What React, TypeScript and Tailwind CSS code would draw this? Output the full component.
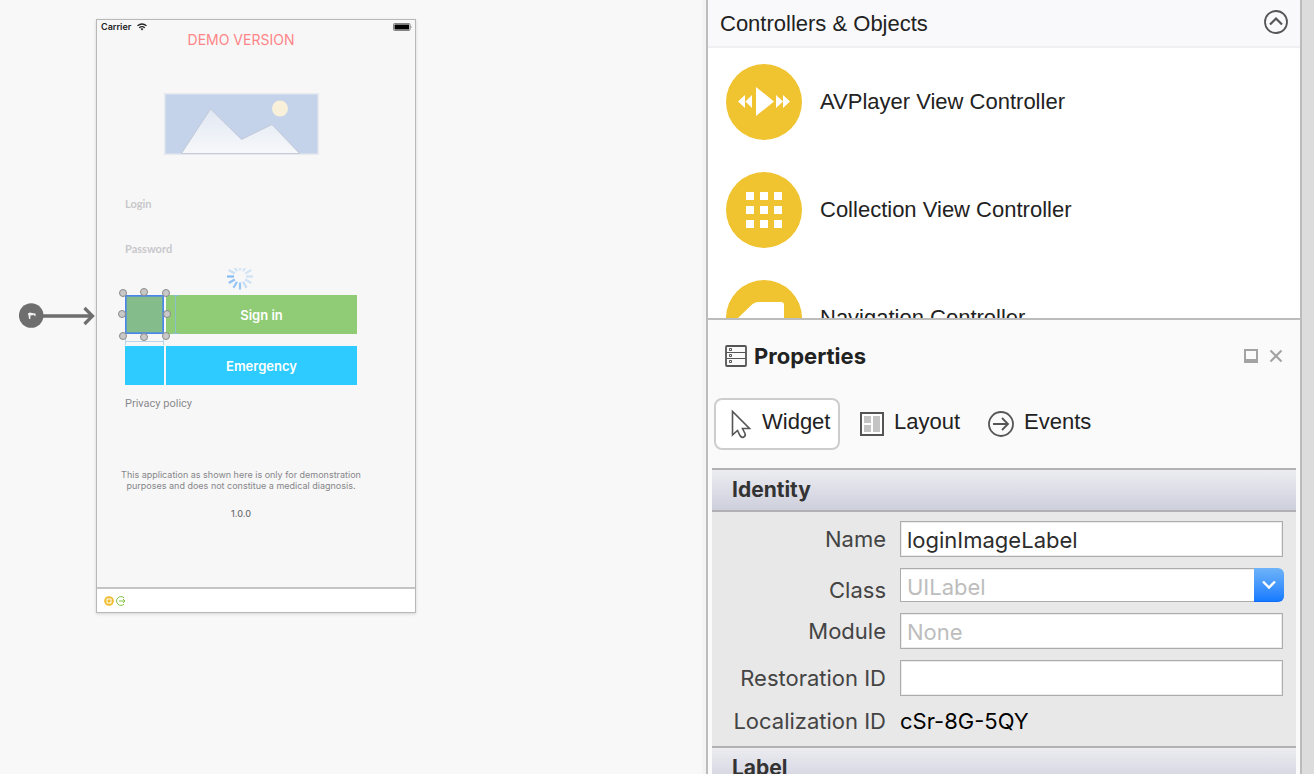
import type { ReactNode } from "react";

const UI = "font-['Inter','Liberation_Sans',sans-serif]";

function PlayerIcon() {
  return (
    <svg viewBox="0 0 76 76" className="size-[76px] shrink-0" aria-hidden="true">
      <circle cx="38" cy="38" r="38" fill="#f0c330" />
      <g fill="#fff">
        <path d="M30 23 48 37.500 30 52Z" />
        <path d="M19 31V44L12 37.500ZM26 31V44L19.500 37.500Z" />
        <path d="M50 31V44L57 37.500ZM57 31V44L64 37.500Z" />
      </g>
    </svg>
  );
}

function CollectionIcon() {
  const steps = [20, 34, 48];
  return (
    <svg viewBox="0 0 76 76" className="size-[76px] shrink-0" aria-hidden="true">
      <circle cx="38" cy="38" r="38" fill="#f0c330" />
      {steps.map((y) => steps.map((x) => <rect key={`${x}-${y}`} x={x} y={y} width="8" height="8" fill="#fff" />))}
    </svg>
  );
}

function NavigationIcon() {
  return (
    <svg viewBox="0 0 76 76" className="size-[76px] shrink-0" aria-hidden="true">
      <circle cx="38" cy="38" r="38" fill="#f0c330" />
      <path d="M12 38 26 24.500Q28.500 22 32 22H55Q58 22 58 25V51Q58 54 55 54H32Q28.500 54 26 51.500Z" fill="#fff" />
    </svg>
  );
}

function LibraryItem({ icon, label }: { icon: ReactNode; label: string }) {
  return (
    <li className="flex items-center gap-[18px]">
      {icon}
      <span className="pb-0.5">{label}</span>
    </li>
  );
}

function Library() {
  return (
    <section className="flex h-80 shrink-0 flex-col overflow-hidden border-b-2 border-[#bcbcbc] bg-white font-['Liberation_Sans',sans-serif] text-[22px] text-[#222]">
      <header className="flex h-12 shrink-0 items-center justify-between border-b-2 border-[#f0f0f3] bg-[#f9f9fc] px-3 pb-0.5">
        <h2 className="pt-0.5">Controllers &amp; Objects</h2>
        <button type="button" aria-label="Collapse section">
          <svg viewBox="0 0 24 24" className="size-6" fill="none" stroke="#555" aria-hidden="true">
            <circle cx="12" cy="12" r="11" strokeWidth="1.800" />
            <path d="m6 14.500 6-6 6 6" strokeWidth="2.200" />
          </svg>
        </button>
      </header>
      <ul className="flex flex-col gap-8 px-[18px] pt-4">
        <LibraryItem icon={<PlayerIcon />} label="AVPlayer View Controller" />
        <LibraryItem icon={<CollectionIcon />} label="Collection View Controller" />
        <LibraryItem icon={<NavigationIcon />} label="Navigation Controller" />
      </ul>
    </section>
  );
}

function SectionTitle({ children }: { children: ReactNode }) {
  return (
    <h3 className="flex h-11 shrink-0 items-center border-y-2 border-[#b1b1b4] bg-linear-to-b from-[#ececf1] to-[#cdcfdc] px-5 text-[21px] leading-8 font-bold text-[#333]">
      {children}
    </h3>
  );
}

const labelClass = "w-[174px] shrink-0 text-right text-[22px] leading-6 text-[#444]";
const fieldClass =
  "h-9 w-full min-w-0 border border-[#acacac] bg-white px-1.5 pt-0.5 text-[22px] text-[#2c2c2c] shadow-[inset_0_0_0_1px_#ececec] outline-none placeholder:text-[#bdbdbd]";

function TextField({ id, label, value, placeholder }: { id: string; label: string; value?: string; placeholder?: string }) {
  return (
    <div className="flex items-center gap-3.5">
      <label htmlFor={id} className={labelClass}>
        {label}
      </label>
      <input id={id} type="text" defaultValue={value} placeholder={placeholder} className={fieldClass} />
    </div>
  );
}

function Properties() {
  return (
    <section className={`${UI} flex min-h-0 flex-1 flex-col overflow-hidden bg-[#fafafa]`}>
      <header className="flex h-[72px] shrink-0 items-center gap-[7px] pr-[17px] pl-[17px]">
        <svg viewBox="0 0 22 22" className="size-[22px]" fill="none" stroke="#555" aria-hidden="true">
          <rect x="1" y="1" width="20" height="20" rx="1" strokeWidth="1.800" />
          <path d="M1 7.500H21M1 13.500H21" strokeWidth="1" />
          <path d="M4.500 3.500H6.500V5.500H4.500ZM4.500 9.500H6.500V11.500H4.500ZM4.500 15.500H6.500V17.500H4.500Z" />
        </svg>
        <h2 className="flex-1 text-[22px] font-bold text-[#222]">Properties</h2>
        <button type="button" aria-label="Restore panel">
          <svg viewBox="0 0 14 14" className="size-3.5" fill="none" stroke="#a3a3a3" aria-hidden="true">
            <path d="M1 1H13V13H1Z" strokeWidth="2" />
            <path d="M1 12H13" strokeWidth="4" />
          </svg>
        </button>
        <button type="button" aria-label="Close panel" className="ml-1">
          <svg viewBox="0 0 14 14" className="size-3.5" fill="none" stroke="#a3a3a3" aria-hidden="true">
            <path d="m1.500 1.500 11 11M12.500 1.500l-11 11" strokeWidth="2.200" />
          </svg>
        </button>
      </header>

      <div className="flex h-[76px] shrink-0 items-start px-1.5 pt-1.5 font-['Liberation_Sans',sans-serif] text-[22px] text-[#222]">
        <button type="button" className="flex h-[52px] w-[126px] items-center gap-2.5 rounded-lg border-2 border-[#cdcdcd] bg-white pl-3.5">
          <svg viewBox="0 0 22 30" className="h-[30px] w-[22px] shrink-0" fill="none" stroke="#555" strokeWidth="1.600" aria-hidden="true">
            <path d="M2.500 2.500V26L7.500 21.500L10 26.500Q11.500 29 13.500 28.200Q16 27 15 24.500L12.500 19.500H19.500Z" />
          </svg>
          <span className="pb-1.5">Widget</span>
        </button>
        <button type="button" className="ml-5 flex h-[52px] items-center gap-2.5">
          <svg viewBox="0 0 24 24" className="size-6" aria-hidden="true">
            <rect x="1" y="1" width="22" height="22" fill="#fff" stroke="#555" strokeWidth="2" />
            <path d="M4 4H11V11H4ZM4 13H11V20H4ZM13 4H20V20H13Z" fill="#c4c4c4" />
          </svg>
          <span className="pb-1.5">Layout</span>
        </button>
        <button type="button" className="ml-7 flex h-[52px] items-center gap-2.5">
          <svg viewBox="0 0 26 26" className="size-[26px]" fill="none" stroke="#555" aria-hidden="true">
            <circle cx="13" cy="13" r="12" strokeWidth="1.800" />
            <path d="M5 13H20M14 7l6 6-6 6" strokeWidth="1.800" />
          </svg>
          <span className="pb-1.5">Events</span>
        </button>
      </div>

      <div className="mx-1 flex flex-col">
        <SectionTitle>Identity</SectionTitle>
        <div className="flex flex-col gap-[11px] bg-[#e8e8e8] pt-[9px] pr-[13px] pb-[11px]">
          <TextField id="name" label="Name" value="loginImageLabel" />
          <div className="flex items-end gap-3.5">
            <label htmlFor="class" className={labelClass}>
              Class
            </label>
            <div className="-mr-px flex h-[34px] min-w-0 flex-1">
              <input
                id="class"
                type="text"
                placeholder="UILabel"
                className="h-full min-w-0 flex-1 border border-r-0 border-[#acacac] bg-white px-1.5 pt-1 text-[22px] shadow-[inset_0_1px_0_#ececec] outline-none placeholder:text-[#bdbdbd]"
              />
              <button
                type="button"
                aria-label="Show classes"
                className="flex w-[30px] items-center justify-center rounded-r-md border-b border-[#0f6bf5] bg-linear-to-b from-[#6db3f8] to-[#147bff]"
              >
                <svg viewBox="0 0 14 10" className="h-2.5 w-3.5" fill="none" stroke="#fff" strokeWidth="2.400" aria-hidden="true">
                  <path d="m1 1.500 6 6 6-6" />
                </svg>
              </button>
            </div>
          </div>
          <TextField id="module" label="Module" placeholder="None" />
          <TextField id="restoration" label="Restoration ID" />
          <div className="flex items-center gap-3.5 py-0.5">
            <span className={labelClass}>Localization ID</span>
            <span className="text-[22px] leading-6 text-black">cSr-8G-5QY</span>
          </div>
        </div>
        <SectionTitle>Label</SectionTitle>
      </div>
    </section>
  );
}

function PlaceholderImage() {
  return (
    <svg viewBox="0 0 155 62" className="h-[62px] w-[155px]" role="img" aria-label="Logo placeholder">
      <defs>
        <linearGradient id="peaks" x1="0" y1="0" x2="0" y2="1">
          <stop offset="0" stopColor="#e1e7f3" />
          <stop offset="1" stopColor="#f7f8fa" />
        </linearGradient>
      </defs>
      <rect x="0.500" y="0.500" width="154" height="61" fill="#c5d3ea" stroke="#e6e9ef" strokeWidth="2" />
      <path d="M17.500 60.500 46.500 16 77.500 46.500 108 31.500 135.500 60.500Z" fill="url(#peaks)" stroke="#bcc3d2" strokeWidth="0.800" />
      <circle cx="116" cy="15.500" r="8" fill="#f9f0d9" />
    </svg>
  );
}

function Spinner() {
  const opacities = [0.3, 0.3, 0.3, 0.35, 0.35, 0.45, 0.8, 0.85, 0.9, 1, 0.4, 0.35];
  return (
    <svg viewBox="0 0 28 26" className="h-[26px] w-7" stroke="#85bcf5" strokeWidth="2.200" aria-hidden="true">
      <defs>
        <clipPath id="spinner-clip">
          <rect x="0" y="4" width="28" height="22" />
        </clipPath>
      </defs>
      <g clipPath="url(#spinner-clip)">
        {opacities.map((opacity, i) => (
          <path key={i} d="M14 6.500V-0.500" opacity={opacity} transform={`rotate(${i * 30} 14 12.500)`} />
        ))}
      </g>
    </svg>
  );
}

function Handle({ place }: { place: string }) {
  return <span className={`absolute size-2 rounded-full border border-[#8a8a8a] bg-[#c9c9c9] ${place}`} />;
}

function SelectedLabel() {
  return (
    <div className="relative z-10 h-[39px] w-[39px] border border-[#4a86e8] bg-[#84bd8b] shadow-[inset_0_0_0_1px_#5c98cc]">
      <Handle place="-top-[7px] -left-[7px]" />
      <Handle place="-top-2 left-[14px]" />
      <Handle place="-top-[7px] -right-[7px]" />
      <Handle place="top-[14px] -left-2" />
      <Handle place="top-[14px] -right-2" />
      <Handle place="-bottom-[7px] -left-[7px]" />
      <Handle place="-bottom-2 left-[14px]" />
      <Handle place="-bottom-[7px] -right-[7px]" />
      <span className="absolute -right-px -bottom-3 -left-px h-1.5 border-x border-[#b9d4ea]">
        <span className="absolute inset-x-0 top-0.5 h-px bg-[#b9d4ea]" />
      </span>
      <span className="absolute -inset-y-px -right-4 w-1.5 border-y border-[#8bbfc9]">
        <span className="absolute inset-y-0 left-0.5 w-px bg-[#8bbfc9]" />
      </span>
    </div>
  );
}

function PhoneScreen() {
  return (
    <div className="absolute top-[19px] left-24 flex h-[594px] w-80 flex-col border border-[#b8b8b8] bg-[#f7f7f7] shadow-[0_1px_3px_rgba(0,0,0,0.15)]">
      <div className="flex h-3.5 items-center pr-[3px] pl-1">
        <span className="text-[9px] font-semibold text-[#222]">Carrier</span>
        <svg viewBox="0 0 10 8" className="ml-1.5 h-2 w-2.5" fill="none" stroke="#222" strokeWidth="1.300" aria-hidden="true">
          <path d="M0.500 2.800Q5-0.800 9.500 2.800M2.200 4.800Q5 2.500 7.800 4.800" />
          <path d="M3.500 5.800 5 7.500 6.500 5.800Q5 4.800 3.500 5.800Z" fill="#222" stroke="none" />
        </svg>
        <svg viewBox="0 0 19 8" className="ml-auto h-2 w-[19px]" aria-hidden="true">
          <rect x="0.500" y="0.500" width="16.500" height="7" rx="1" fill="#f7f7f7" stroke="#666" strokeWidth="0.800" />
          <rect x="1.500" y="1.500" width="14.500" height="5" fill="#000" />
          <path d="M17.800 2.500Q19 4 17.800 5.500Z" fill="#333" />
        </svg>
      </div>
      <div className="flex flex-1 flex-col pr-[58px] pl-7">
        <p className="text-center text-sm leading-[11px] text-[#ff8587]">DEMO VERSION</p>
        <div className="mt-12 flex justify-center">
          <PlaceholderImage />
        </div>
        <p className="mt-[41px] font-['Lato',sans-serif] text-[11px] leading-4 font-bold text-[#c8c8cb]">Login</p>
        <p className="mt-[29px] font-['Lato',sans-serif] text-[11px] leading-4 font-bold text-[#c8c8cb]">Password</p>
        <div className="mt-[7px] flex justify-center pr-0.5">
          <Spinner />
        </div>
        <div className="mt-[5px] flex gap-0.5">
          <SelectedLabel />
          <button type="button" className="h-[39px] flex-1 bg-[#90cb75] pt-0.5 text-[13px] font-semibold text-white">
            Sign in
          </button>
        </div>
        <div className="mt-3 flex gap-0.5">
          <div className="w-[39px] bg-[#2dcbff]" />
          <button type="button" className="h-[39px] flex-1 bg-[#2dcbff] pt-0.5 text-[13px] font-semibold text-white">
            Emergency
          </button>
        </div>
        <a href="#privacy" className="mt-[11px] self-start font-['Roboto',sans-serif] text-[11px] leading-4 text-[#8a8a8e]">
          Privacy policy
        </a>
        <p className="-mx-2 mt-[57px] text-center text-[9px] leading-[11px] text-[#86868a]">
          This application as shown here is only for demonstration
          <br />
          purposes and does not constitue a medical diagnosis.
        </p>
        <p className="mt-[17px] text-center text-[9px] leading-3 font-medium text-[#707074]">1.0.0</p>
      </div>
      <div className="flex h-[25px] items-center gap-0.5 border-t-2 border-[#c4c4c4] bg-white px-[7px]">
        <svg viewBox="0 0 10 10" className="size-2.5" aria-hidden="true">
          <circle cx="5" cy="5" r="4.800" fill="#f0bc2c" />
          <rect x="3" y="3" width="4" height="4" fill="none" stroke="#fff" strokeWidth="1" />
        </svg>
        <svg viewBox="0 0 10 10" className="size-2.5" fill="none" stroke="#84c341" aria-hidden="true">
          <path d="M8 1.800A4.400 4.400 0 1 0 8 8.200M3 5H9M7 3l2 2-2 2" />
        </svg>
      </div>
    </div>
  );
}

function EntryArrow() {
  return (
    <svg viewBox="0 0 76 26" className="absolute top-[303px] left-[19px] h-[26px] w-[76px]" fill="none" aria-hidden="true">
      <circle cx="12.200" cy="12.500" r="12.300" fill="#6e6e6e" />
      <path d="M24 13H74" stroke="#6e6e6e" strokeWidth="3.600" />
      <path d="m65.500 5 8 8-8 8" stroke="#6e6e6e" strokeWidth="3.200" />
      <path d="M10 16 9.500 12.500 8.800 10.500 11 9.500 14 10.200 16.500 10.500V13.500L14.500 12 11.500 12.500 11.300 16Z" fill="#f2f2f2" />
    </svg>
  );
}

export default function App() {
  return (
    <div className="flex h-screen overflow-hidden bg-[#dcdcdc]">
      <main className={`${UI} relative min-w-0 flex-1 border-r-4 border-[#f3f3f3] bg-[#f8f8f8]`}>
        <EntryArrow />
        <PhoneScreen />
      </main>
      <aside className="mr-3 flex w-[596px] shrink-0 flex-col border-x-2 border-[#bcbcbc]">
        <Library />
        <Properties />
      </aside>
    </div>
  );
}
